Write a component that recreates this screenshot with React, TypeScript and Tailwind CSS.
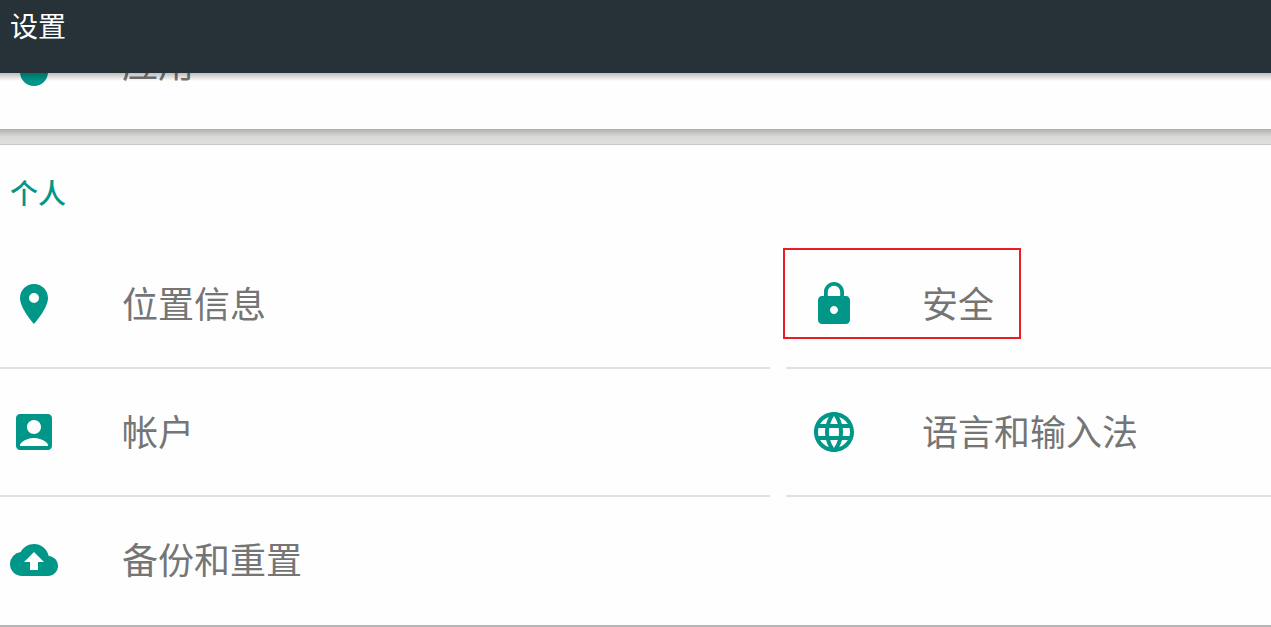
import type { ReactNode } from "react";
import { MdAccountBox, MdCloudUpload, MdLanguage, MdLocationOn, MdLock } from "react-icons/md";

type SettingProps = {
  icon: ReactNode;
  label: string;
  side?: "left" | "right";
  divider?: boolean;
  highlighted?: boolean;
};

function Setting({ icon, label, side = "left", divider = true, highlighted = false }: SettingProps) {
  return (
    <a
      href="#"
      className={`relative flex h-32 shrink-0 items-center gap-16 border-b-2 text-4xl text-[#757575] ${
        side === "left" ? "pl-2.5" : "pl-6"
      } ${divider ? "border-[#e0e0e0]" : "border-transparent"}`}
    >
      <span className="size-12 shrink-0 text-[#009688]">{icon}</span>
      <span className="pb-1 whitespace-nowrap">{label}</span>
      {highlighted && (
        <span
          aria-hidden="true"
          className="pointer-events-none absolute top-[7px] -left-[3px] h-[91px] w-[238px] border-2 border-[#ed1c24]"
        />
      )}
    </a>
  );
}

function AppsIcon() {
  return (
    <svg viewBox="0 0 24 24" className="size-12" fill="currentColor" aria-hidden="true">
      <circle cx="12" cy="16" r="7" />
    </svg>
  );
}

export default function App() {
  return (
    <div className="min-h-screen bg-[#e0e0de] font-['Noto_Sans_CJK_SC',sans-serif]">
      <header className="relative z-10 h-[73px] bg-[#263238] px-2.5 py-[5px] after:pointer-events-none after:absolute after:inset-x-0 after:top-full after:h-2 after:bg-linear-to-b after:from-black/25 after:to-transparent">
        <h1 className="text-[28px] leading-10 text-white">设置</h1>
      </header>

      <main>
        <section className="flex h-14 flex-col justify-end overflow-hidden bg-[#fefefe]">
          <Setting icon={<AppsIcon />} label="应用" divider={false} />
        </section>

        <div className="h-4 border-b border-[#c8c8c6] bg-linear-to-b from-[#b0b0ae] via-[#dadad8] to-[#e0e0de]" />

        <section className="border-b-2 border-[#b5b5b5] bg-[#fefefe]">
          <h2 className="flex h-24 items-center px-2.5 pb-[3px] text-[28px] font-medium text-[#009688]">个人</h2>
          <div className="grid grid-cols-[minmax(0,770fr)_minmax(0,485fr)] gap-x-4">
            <Setting icon={<MdLocationOn className="size-12" />} label="位置信息" />
            <Setting icon={<MdLock className="size-12" />} label="安全" side="right" highlighted />
            <Setting icon={<MdAccountBox className="size-12" />} label="帐户" />
            <Setting icon={<MdLanguage className="size-12" />} label="语言和输入法" side="right" />
            <Setting icon={<MdCloudUpload className="size-12" />} label="备份和重置" divider={false} />
          </div>
        </section>
      </main>
    </div>
  );
}
